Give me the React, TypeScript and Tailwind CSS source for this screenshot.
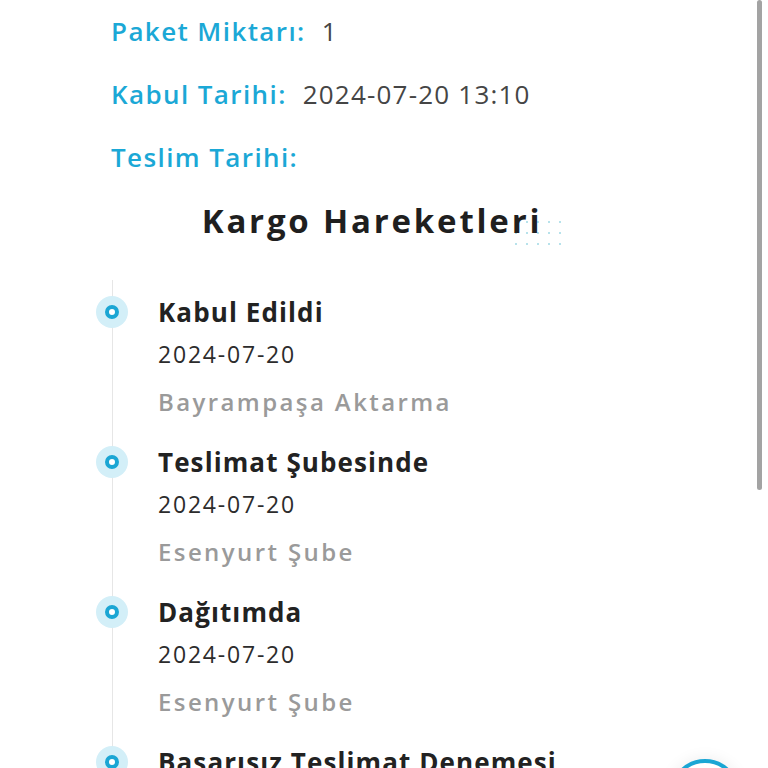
import React from 'react';

// Kargo takip — detay satırları + hareket zaman çizelgesi

const events = [
  { title: 'Kabul Edildi', date: '2024-07-20', place: 'Bayrampaşa Aktarma' },
  { title: 'Teslimat Şubesinde', date: '2024-07-20', place: 'Esenyurt Şube' },
  { title: 'Dağıtımda', date: '2024-07-20', place: 'Esenyurt Şube' },
  { title: 'Başarısız Teslimat Denemesi', date: '2024-07-20', place: 'Esenyurt Şube' },
];

function InfoRow({ label, value }: { label: string; value?: string }) {
  return (
    <div className="h-[63px] flex items-center gap-[16px]">
      <span className="text-[26px] font-semibold text-[#1ba8d6] tracking-[1.4px]">{label}</span>
      {value && <span className="text-[26px] text-[#454545] tracking-[1.2px]">{value}</span>}
    </div>
  );
}

export default function App() {
  return (
    <div
      className="relative h-[768px] overflow-hidden bg-white"
      style={{ fontFamily: '"Open Sans", "Noto Sans", sans-serif' }}
    >
      {/* fake scrollbar */}
      <div className="absolute right-[6px] top-0 w-[5px] h-[490px] rounded-full bg-[#a3a3a3]" />

      <div className="pl-[111px]">
        <InfoRow label="Paket Miktarı:" value="1" />
        <InfoRow label="Kabul Tarihi:" value="2024-07-20 13:10" />
        <InfoRow label="Teslim Tarihi:" />
      </div>

      {/* Title */}
      <div className="h-[63px] flex items-center justify-center pr-[24px]">
        <div className="relative">
          <div className="absolute right-[-19px] top-[25px] grid grid-cols-5 gap-x-[9px] gap-y-[9px]">
            {Array.from({ length: 15 }).map((_, i) => (
              <span key={i} className="w-[2px] h-[2px] rounded-full bg-[#9fd9e4]" />
            ))}
          </div>
          <h2 className="relative text-[33px] font-bold text-[#1f1f1f] tracking-[2.8px]">
            Kargo Hareketleri
          </h2>
        </div>
      </div>

      {/* Timeline */}
      <div className="relative mt-[40px] pl-[96px]">
        <div className="absolute left-[112px] top-[-12px] bottom-0 w-px bg-[#e6e6e6]" />
        {events.map((e) => (
          <div key={e.title} className="relative flex gap-[30px] pb-[20px]">
            <div className="w-8 h-10 flex items-center justify-center shrink-0">
              <div className="w-8 h-8 rounded-full bg-[#d3eff8] flex items-center justify-center">
                <div className="w-[14px] h-[14px] rounded-full border-[4px] border-[#1aa6d4] bg-white" />
              </div>
            </div>
            <div className="flex flex-col">
              <div className="h-10 flex items-center text-[26px] font-bold text-[#222] tracking-[1.1px] whitespace-nowrap">
                {e.title}
              </div>
              <div className="h-10 mt-[2px] flex items-center text-[23px] text-[#2c2c2c] tracking-[1.8px]">
                {e.date}
              </div>
              <div className="h-10 mt-2 flex items-center text-[24px] font-semibold text-[#9a9a9a] tracking-[2.4px]">
                {e.place}
              </div>
            </div>
          </div>
        ))}
      </div>

      {/* floating button */}
      <div className="absolute left-[670px] top-[759px] w-[70px] h-[70px] rounded-full border-[4px] border-[#1aa6d4] bg-white shadow-[0_0_16px_rgba(0,0,0,0.08)]" />
    </div>
  );
}
